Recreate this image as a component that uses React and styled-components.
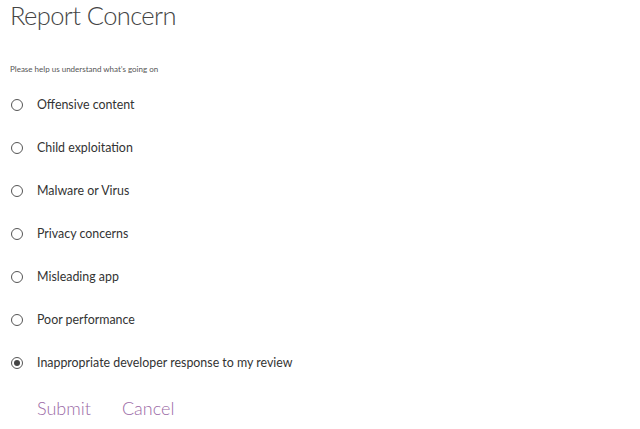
import React, {useState} from 'react';
import styled, {createGlobalStyle} from 'styled-components';

const Global = createGlobalStyle`
    body {
        margin: 0;
        background: #fff;
        font-family: Lato, "Open Sans", sans-serif;
        color: #333;
    }
`;

const Page = styled.div`
    padding: 0 0 0 10px;
`;

const Title = styled.h1`
    margin: 0;
    font-size: 25.5px;
    line-height: 30px;
    letter-spacing: -0.6px;
    font-weight: 300;
    color: #444;
`;

const Hint = styled.p`
    margin: 33px 0 0;
    font-size: 8px;
    line-height: 12px;
    color: #555;
`;

const Options = styled.div`
    display: flex;
    flex-direction: column;
    margin-top: 8px;
`;

const Option = styled.label`
    display: flex;
    align-items: center;
    height: 43px;
    cursor: pointer;
`;

const Circle = styled.span`
    box-sizing: border-box;
    width: 12px;
    height: 12px;
    margin-left: 1px;
    border: 1px solid #555;
    border-radius: 50%;
    display: flex;
    align-items: center;
    justify-content: center;

    &::after {
        content: '';
        width: 6px;
        height: 6px;
        border-radius: 50%;
        background: ${p => (p.$checked ? '#444' : 'transparent')};
    }
`;

const Text = styled.span`
    margin-left: 14px;
    font-size: 12.4px;
    color: #333;
`;

const Actions = styled.div`
    display: flex;
    gap: 31px;
    padding-left: 27px;
    margin-top: 13px;
`;

const Action = styled.button`
    border: 0;
    background: none;
    padding: 0;
    font-family: inherit;
    font-size: 18px;
    font-weight: 300;
    color: #9b6aa6;
    cursor: pointer;
`;

const reasons = [
    'Offensive content',
    'Child exploitation',
    'Malware or Virus',
    'Privacy concerns',
    'Misleading app',
    'Poor performance',
    'Inappropriate developer response to my review'
];

export default function App() {
    const [picked, setPicked] = useState(reasons.length - 1);

    return (
        <Page>
            <Global />
            <Title>Report Concern</Title>
            <Hint>Please help us understand what’s going on</Hint>
            <Options>
                {reasons.map((reason, i) => (
                    <Option key={reason} onClick={() => setPicked(i)}>
                        <Circle $checked={picked === i} />
                        <Text>{reason}</Text>
                    </Option>
                ))}
            </Options>
            <Actions>
                <Action>Submit</Action>
                <Action>Cancel</Action>
            </Actions>
        </Page>
    );
}
